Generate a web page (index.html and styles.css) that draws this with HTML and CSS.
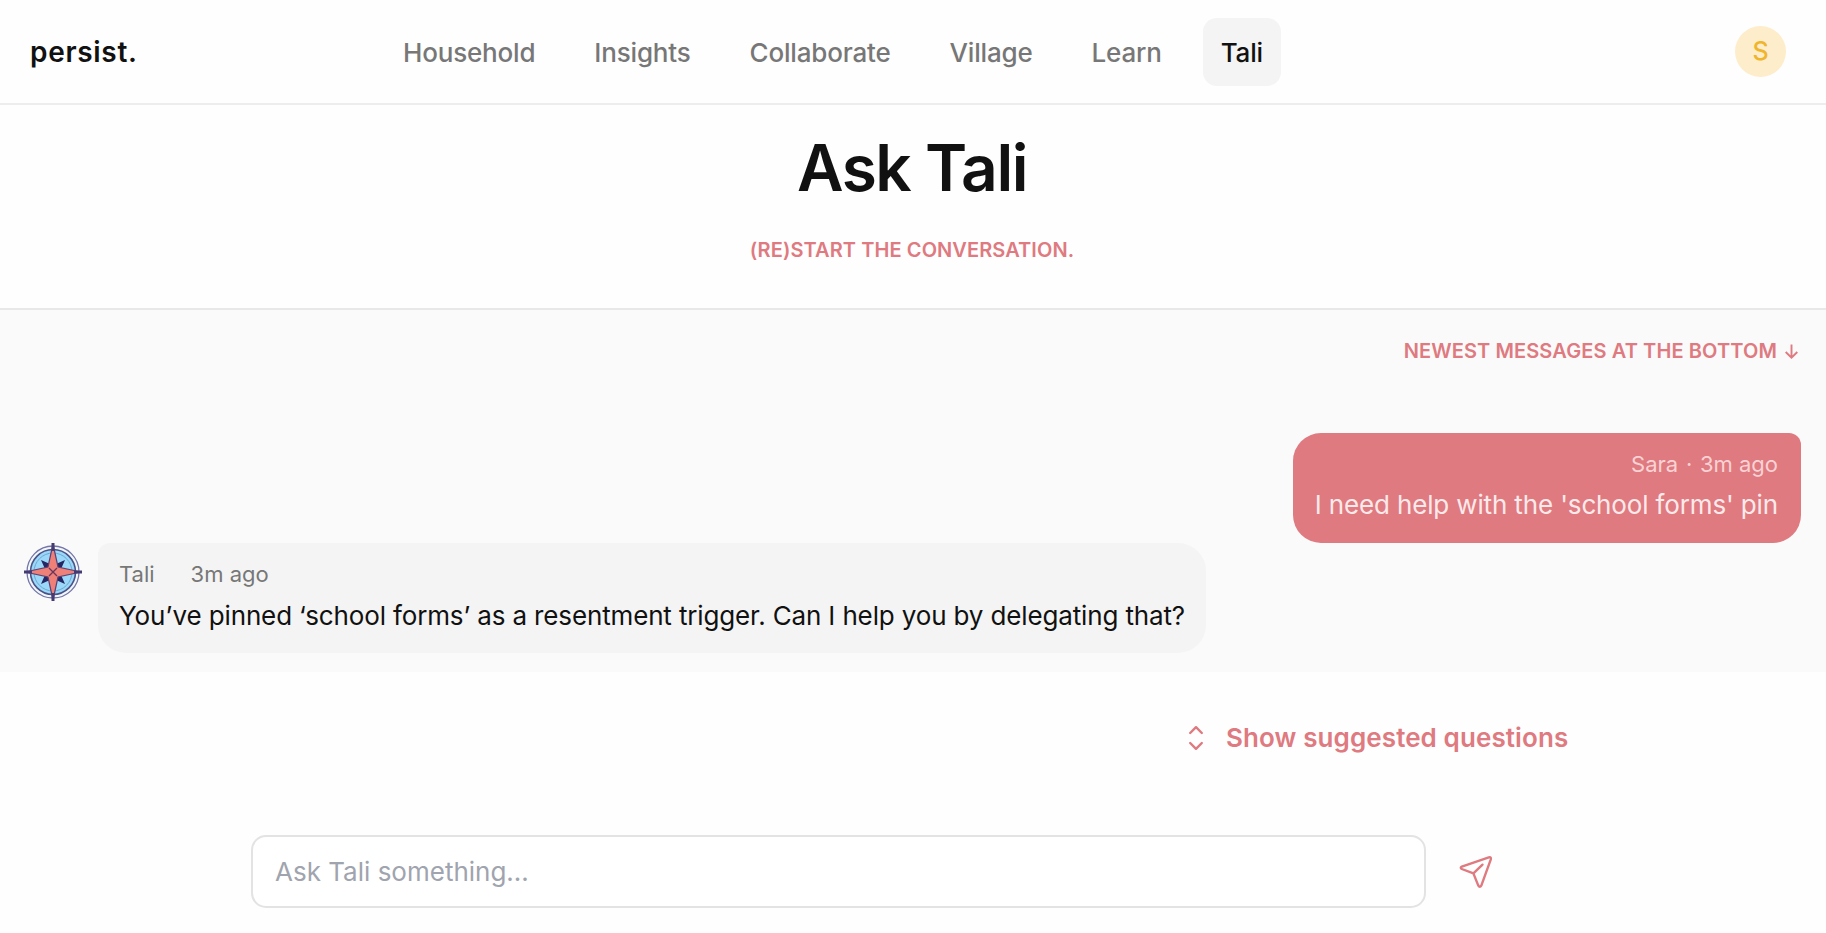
FILE: index.html
```html
<!DOCTYPE html>
<html lang="en">
<head>
<meta charset="UTF-8">
<title>Ask Tali</title>
<link rel="stylesheet" href="styles.css">
</head>
<body>
  <header class="topbar">
    <div class="brand">persist.</div>
    <nav class="nav">
      <a class="nav-item">Household</a>
      <a class="nav-item">Insights</a>
      <a class="nav-item">Collaborate</a>
      <a class="nav-item">Village</a>
      <a class="nav-item">Learn</a>
      <a class="nav-item active">Tali</a>
    </nav>
    <div class="avatar">S</div>
  </header>

  <section class="hero">
    <h1 class="title">Ask Tali</h1>
    <div class="subtitle">(RE)START THE CONVERSATION.</div>
  </section>

  <main class="chat">
    <div class="hint">NEWEST MESSAGES AT THE BOTTOM
      <svg class="arrow" viewBox="0 0 16 18"><path d="M8 1.5v14M1.8 9.5 8 15.7l6.2-6.2"/></svg>
    </div>
    <div class="bubble mine">
      <div class="meta">Sara <span class="dot">·</span> 3m ago</div>
      <div class="text">I need help with the 'school forms' pin</div>
    </div>
    <div class="row">
      <svg class="compass" viewBox="0 0 58 58">
        <circle cx="29" cy="29" r="26" fill="#f2f6fd" stroke="#7476a6" stroke-width="1.3"/>
        <circle cx="29" cy="29" r="22.5" fill="#9ad7f8" stroke="#4b5286" stroke-width="1.6"/>
        <circle cx="29" cy="29" r="19" fill="none" stroke="#6fa8d0" stroke-width="1"/>
        <path d="M17 17l9 4 3 2 3-2 9-4-4 9-2 3 2 3 4 9-9-4-3-2-3 2-9 4 4-9 2-3-2-3z" fill="#252663"/>
        <path d="M29 1l5 23 23 5-23 5-5 23-5-23-23-5 23-5z" fill="#ee8078" stroke="#5b4176" stroke-width="1.2"/>
        <path d="M29 0v8M29 50v8M0 29h8M50 29h8" stroke="#443b72" stroke-width="3"/>
        <path d="M25 25l8 8M33 25l-8 8" stroke="#69365f" stroke-width="1.3"/>
      </svg>
      <div class="bubble theirs">
        <div class="meta"><span>Tali</span><span>3m ago</span></div>
        <div class="text">You’ve pinned ‘school forms’ as a resentment trigger. Can I help you by delegating that?</div>
      </div>
    </div>
  </main>

  <footer class="composer">
    <button class="suggest">
      <svg class="updown" viewBox="0 0 16 26"><path d="M2.2 8 8 2.2 13.8 8M2.2 18 8 23.8l5.8-5.8"/></svg>
      Show suggested questions
    </button>
    <div class="ask">
      <input class="field" type="text" placeholder="Ask Tali something...">
      <button class="send">
        <svg class="plane" viewBox="0 0 34 34"><path d="M2.8 11.6 29.8 2.4Q32.5 1.7 31.8 4.4L22.4 30.4Q20.8 33 19.2 30.4L14.4 18.4 2.8 14Q0.8 12.7 2.8 11.6ZM14.4 18.4l9.1-8.7"/></svg>
      </button>
    </div>
  </footer>
</body>
</html>
```

FILE: styles.css
```css
* {
  box-sizing: border-box;
}
body {
  margin: 0;
  background: #fefefe;
  font-family: Inter, sans-serif;
  color: #111;
}
button {
  font-family: inherit;
  background: none;
  border: none;
  padding: 0;
}
svg {
  display: block;
  flex: none;
}

.topbar {
  display: flex;
  align-items: center;
  height: 105px;
  padding: 0 40px 0 30px;
  border-bottom: 2px solid #ededed;
}
.brand {
  width: 355px;
  font-size: 28px;
  font-weight: 600;
  line-height: 32px;
  letter-spacing: 0.7px;
}
.nav {
  display: flex;
  gap: 23px;
}
.nav-item {
  padding: 2px 18px 0;
  font-size: 26px;
  font-weight: 500;
  line-height: 66px;
  letter-spacing: -0.18px;
  color: #777;
  border-radius: 14px;
}
.nav-item.active {
  background: #f4f4f4;
  color: #111;
}
.avatar {
  width: 51px;
  margin-left: auto;
  border-radius: 50%;
  background: #feedcb;
  color: #efb52d;
  font-size: 25px;
  font-weight: 500;
  line-height: 51px;
  text-align: center;
}

.hero {
  height: 205px;
  padding: 23px 2px 0 0;
  border-bottom: 2px solid #e8e8e8;
  text-align: center;
}
.title {
  margin: 0;
  font-size: 64px;
  font-weight: 600;
  line-height: 80px;
  letter-spacing: -1.45px;
}
.subtitle {
  margin-top: 30px;
  font-size: 20px;
  font-weight: 600;
  line-height: 24px;
  letter-spacing: 0.08px;
  color: #de7a80;
}

.chat {
  display: flex;
  flex-direction: column;
  height: 362px;
  padding: 29px 25px 0 24px;
  background: #fafafa;
}
.hint {
  display: flex;
  align-items: center;
  justify-content: flex-end;
  gap: 7px;
  padding-right: 2px;
  font-size: 20px;
  font-weight: 600;
  line-height: 24px;
  letter-spacing: 0.11px;
  color: #de7a80;
}
.arrow {
  width: 15px;
  height: 17px;
  fill: none;
  stroke: #de7a80;
  stroke-width: 2;
}
.bubble {
  height: 110px;
  padding: 17px 23px 0 21px;
  border-radius: 28px;
}
.meta {
  font-size: 22px;
  line-height: 28px;
}
.dot {
  margin: 0 1.5px;
}
.text {
  margin-top: 11px;
  font-size: 26px;
  line-height: 32px;
  letter-spacing: -0.14px;
  white-space: nowrap;
}
.mine {
  align-self: flex-end;
  width: 508px;
  margin-top: 70px;
  border-top-right-radius: 12px;
  background: #de7a80;
  color: #ffe9ea;
  text-align: right;
}
.mine .meta {
  color: #fad2d4;
}
.row {
  display: flex;
  gap: 16px;
}
.compass {
  width: 58px;
  height: 58px;
}
.theirs {
  width: 1108px;
  border-top-left-radius: 12px;
  background: #f4f4f4;
}
.theirs .meta {
  display: flex;
  gap: 36px;
  color: #777;
}
.theirs .text {
  margin-top: 12px;
}

.composer {
  padding: 48px 251px 0;
}
.suggest {
  display: flex;
  align-items: center;
  gap: 22px;
  margin-left: 937px;
  font-size: 26px;
  font-weight: 600;
  line-height: 36px;
  letter-spacing: 0.1px;
  color: #de7a80;
  white-space: nowrap;
}
.updown {
  width: 16px;
  height: 26px;
  fill: none;
  stroke: #de7a80;
  stroke-width: 2.4;
  stroke-linecap: round;
  stroke-linejoin: round;
}
.ask {
  display: flex;
  align-items: center;
  gap: 33px;
  margin-top: 79px;
}
.field {
  width: 1175px;
  height: 73px;
  padding: 0 22px;
  border: 2px solid #e3e3e3;
  border-radius: 15px;
  background: #fff;
  font-family: inherit;
  font-size: 26px;
}
.field::placeholder {
  color: #9fa4ae;
}
.plane {
  width: 34px;
  height: 34px;
  fill: none;
  stroke: #de7a80;
  stroke-width: 2.4;
  stroke-linecap: round;
  stroke-linejoin: round;
}
```
